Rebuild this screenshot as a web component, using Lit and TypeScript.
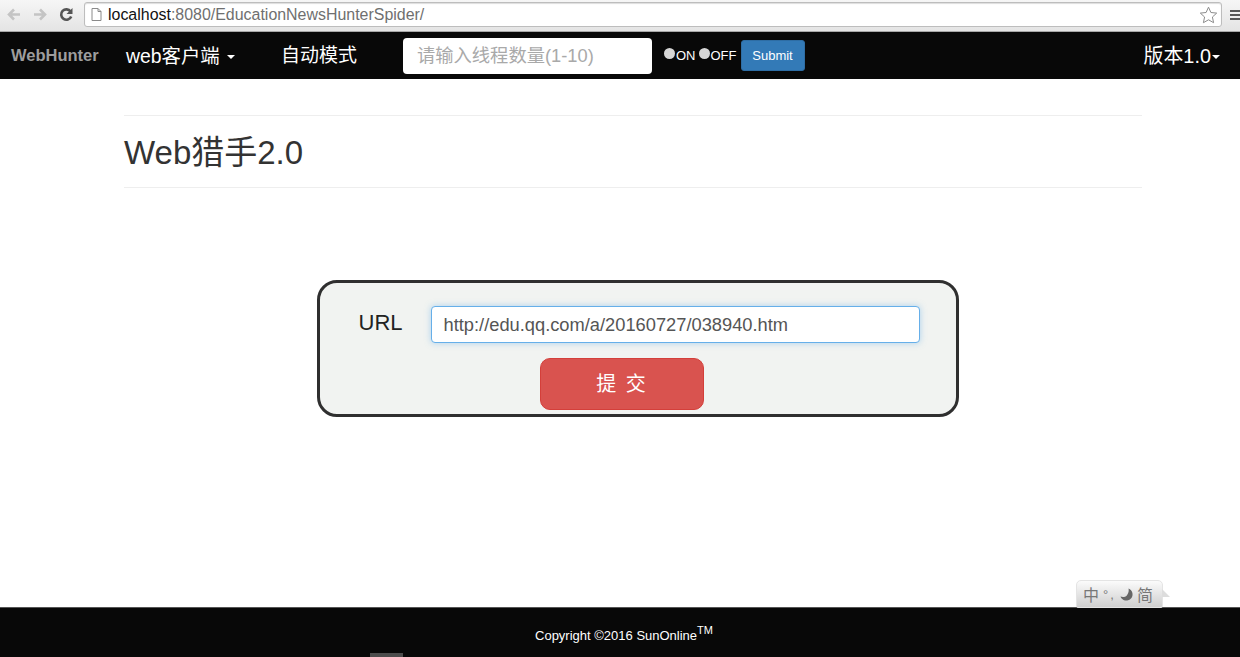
import { LitElement, html, css } from "lit";
import { customElement } from "lit/decorators.js";

@customElement("app-root")
export class AppRoot extends LitElement {
  static styles = css`
    :host { display: flex; flex-direction: column; height: 657px; width: 1240px; position: relative; overflow: hidden; background: #fff; font-family: "Liberation Sans", "Noto Sans CJK SC", sans-serif; color: #333; }
    .chrome { height: 32px; box-sizing: border-box; flex: none; display: flex; align-items: center; background: linear-gradient(#f6f6f6, #e4e4e4); border-bottom: 1px solid #a8a8a8; padding: 0 0 2px 5px; }
    .nav-ic { width: 17px; height: 17px; flex: none; margin-right: 10px; }
    .nav-ic.reload { margin-right: 9px; margin-left: -1px; }
    .addr { flex: none; width: 1138px; height: 25px; box-sizing: border-box; border: 1px solid #bdbdbd; border-radius: 3px; background: #fff; display: flex; align-items: center; padding: 0 3px 0 6px; font-size: 15.95px; color: #6f6f6f; box-shadow: inset 0 1px 1px #ddd; }
    .page { flex: none; margin-right: 6px; }
    .star { flex: none; }
    .addr b { font-weight: normal; color: #111; }
    .addr span { flex: 1; white-space: nowrap; }
    .menu { margin-left: 8px; flex: none; width: 10px; height: 10px; border-top: 2px solid #555; border-bottom: 2px solid #555; box-sizing: border-box; position: relative; }
    .menu::after { content: ""; position: absolute; left: 0; right: 0; top: 2px; height: 2px; background: #555; }
    .navbar { height: 47px; flex: none; background: #080808; display: flex; align-items: center; color: #fff; font-size: 18px; }
    .brand { margin-left: 11px; width: 115px; font-size: 16.5px; font-weight: bold; color: #9d9d9d; padding-bottom: 1px; }
    .item { white-space: nowrap; padding-bottom: 3px; }
    .drop { width: 155px; font-size: 19.4px; }
    .auto { width: 122px; font-size: 19px; padding-bottom: 4px; }
    .caret { display: inline-block; width: 0; height: 0; margin-left: 2px; vertical-align: middle; border-top: 4px solid #fff; border-left: 4px solid transparent; border-right: 4px solid transparent; }
    .thread { width: 249px; height: 36px; box-sizing: border-box; border-radius: 4px; background: #fff; color: #a9a9a9; font-size: 18.3px; display: flex; align-items: center; padding: 0 0 3px 14px; margin-right: 12px; white-space: nowrap; }
    .radio { display: flex; align-items: center; font-size: 13px; margin-right: 3px; }
    .dot { width: 11px; height: 11px; border-radius: 50%; background: #d6d6d6; margin-top: -5px; margin-right: 1px; }
    .submit { width: 64px; height: 31px; border-radius: 3px; background: #337ab7; color: #fff; font-size: 13px; display: flex; align-items: center; justify-content: center; border: 1px solid #2e6da4; box-sizing: border-box; margin-left: 1px; }
    .version { margin-left: auto; margin-right: 20px; font-size: 19.9px; white-space: nowrap; padding-bottom: 3px; }
    .version .caret { margin-left: 1px; }
    main { flex: 1; display: flex; flex-direction: column; align-items: center; padding-left: 26px; }
    .header { width: 1018px; margin-top: 36px; box-sizing: border-box; border-top: 1px solid #eee; border-bottom: 1px solid #eee; height: 73px; display: flex; align-items: center; font-size: 33px; color: #333; padding-bottom: 3px; }
    .panel { margin-top: 92px; margin-left: 9px; width: 642px; height: 137px; box-sizing: border-box; border: 3px solid #2f2f2f; border-radius: 20px; background: #f1f3f1; display: flex; flex-direction: column; align-items: center; padding-top: 23px; }
    .row { display: flex; align-items: flex-start; align-self: flex-start; margin-left: 39px; }
    .label { width: 72px; font-size: 22px; line-height: 32px; color: #222; margin-top: 1px; }
    .url { width: 489px; height: 37px; box-sizing: border-box; border: 1px solid #66afe9; border-radius: 4px; background: #fff; box-shadow: 0 0 6px rgba(102,175,233,.5); font-size: 18.3px; color: #555; display: flex; align-items: center; padding-left: 12px; white-space: nowrap; }
    .btn { margin-top: 15px; margin-left: -31px; width: 164px; height: 52px; box-sizing: border-box; border: 1px solid #d43f3a; border-radius: 10px; background: #d9534f; color: #fff; font-size: 20px; letter-spacing: 2px; display: flex; align-items: center; justify-content: center; padding-bottom: 3px; }
    footer { height: 50px; flex: none; background: #080808; border-top: 1px solid #555; box-sizing: border-box; color: #fff; font-size: 13px; display: flex; justify-content: center; padding-top: 20px; padding-left: 8px; }
    footer .tm { font-size: 11px; position: relative; top: -3px; line-height: 1; }
    .tab { position: absolute; left: 370px; bottom: 0; width: 33px; height: 4px; background: #4c4c4c; }
    .ime { position: absolute; left: 1076px; top: 580px; width: 87px; height: 28px; box-sizing: border-box; border: 1px solid #e4e4e4; border-radius: 5px 5px 2px 2px; background: linear-gradient(#fbfbfb, #cfcfcf); color: #777; font-size: 16px; display: flex; align-items: center; padding-left: 6px; white-space: nowrap; }
    .moon { margin: 0 4px 0 0; flex: none; }
    .tail { position: absolute; left: 85px; top: 8px; }
    .ime .p { width: 17px; font-size: 13px; letter-spacing: 2px; padding-left: 4px; box-sizing: content-box; }
  `;

  render() {
    return html`
      <div class="chrome">
        <svg class="nav-ic" viewBox="0 0 17 17"><path d="M15 8.5H6M9 3.500l-5 5 5 5" fill="none" stroke="#c4c4c4" stroke-width="2.6"/></svg>
        <svg class="nav-ic" viewBox="0 0 17 17"><path d="M2 8.5h9M8 3.500l5 5-5 5" fill="none" stroke="#c4c4c4" stroke-width="2.6"/></svg>
        <svg class="nav-ic reload" viewBox="0 0 17 17"><path d="M13.2 10.5a5.2 5.2 0 1 1-.6-5" fill="none" stroke="#555" stroke-width="2.6"/><path d="M14.5 2v6h-6z" fill="#555"/></svg>
        <div class="addr">
          <svg class="page" width="11" height="13" viewBox="0 0 11 13"><path d="M1 .5h6l3 3v9H1zM7 .5v3h3" fill="#fff" stroke="#8a8a8a"/></svg>
          <span><b>localhost</b>:8080/EducationNewsHunterSpider/</span>
          <svg class="star" width="19" height="18" viewBox="0 0 19 18"><path d="M9.500 1.200l2.400 5.300 5.800.6-4.300 3.900 1.200 5.700-5.100-2.900-5.100 2.900 1.200-5.700L1.300 7.100l5.800-.6z" fill="#fff" stroke="#8c8c8c"/></svg>
        </div>
        <div class="menu"></div>
      </div>
      <nav class="navbar">
        <div class="brand">WebHunter</div>
        <div class="item drop">web客户端 <span class="caret"></span></div>
        <div class="item auto">自动模式</div>
        <div class="thread">请输入线程数量(1-10)</div>
        <div class="radio"><span class="dot"></span>ON</div>
        <div class="radio"><span class="dot"></span>OFF</div>
        <div class="submit">Submit</div>
        <div class="version">版本1.0<span class="caret"></span></div>
      </nav>
      <main>
        <div class="header">Web猎手2.0</div>
        <div class="panel">
          <div class="row">
            <div class="label">URL</div>
            <div class="url">http://edu.qq.com/a/20160727/038940.htm</div>
          </div>
          <div class="btn">提 交</div>
        </div>
      </main>
      <footer><span>Copyright ©2016 SunOnline</span><span class="tm">TM</span></footer>
      <div class="tab"></div>
      <div class="ime">
        <span>中</span><span class="p">°,</span>
        <svg class="moon" width="13" height="13" viewBox="0 0 13 13"><path d="M8.500.6a6.200 6.200 0 1 1-8 7.900c2 .8 4.800.6 6.300-1.100s2.300-4.300 1.700-6.800z" fill="#666"/></svg>
        <span>简</span>
        <svg class="tail" width="9" height="10" viewBox="0 0 9 10"><path d="M0 0l8 8H0z" fill="#ddd"/></svg>
      </div>
    `;
  }
}
